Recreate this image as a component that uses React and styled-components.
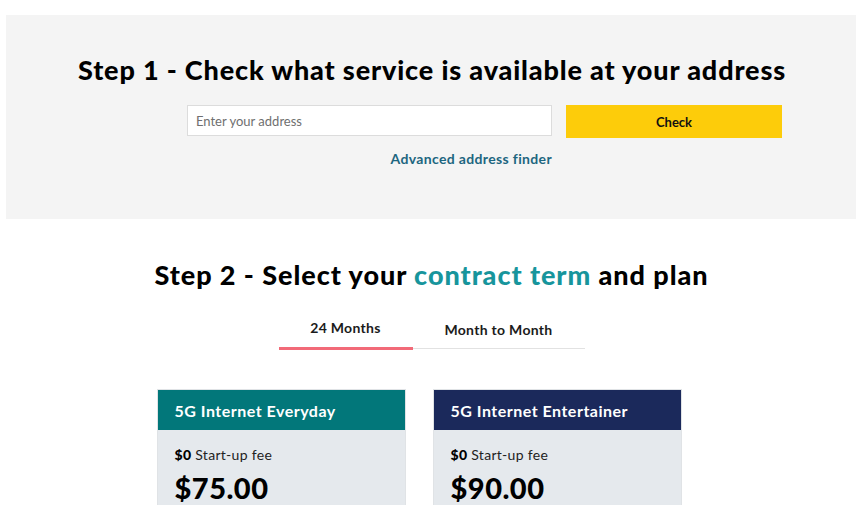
import React from 'react';
import styled, { createGlobalStyle } from 'styled-components';

const GlobalStyle = createGlobalStyle`
  body {
    margin: 0;
    background: #ffffff;
    font-family: Lato, "Noto Sans", Arial, sans-serif;
    color: #000000;
  }
`;

const Page = styled.div`
  width: 863px;
  height: 518px;
  overflow: hidden;
  padding-top: 15px;
  box-sizing: border-box;
`;

const AddressPanel = styled.section`
  margin: 0 7px 0 6px;
  height: 204px;
  background: #f4f4f4;
  padding-top: 39px;
  box-sizing: border-box;
`;

const Inner = styled.div`
  width: 706px;
  margin: 0 auto;
`;

const Heading = styled.h2`
  margin: 0;
  font-size: 27px;
  font-weight: 900;
  line-height: 31px;
  text-align: center;
  white-space: nowrap;
  letter-spacing: ${p => p.$spacing || '0.85px'};
`;

const Accent = styled.span`
  color: #17959c;
`;

const FormRow = styled.div`
  display: flex;
  justify-content: flex-end;
  gap: 14px;
  margin-top: 20px;
  padding-right: 2px;
`;

const InputCol = styled.div`
  display: flex;
  flex-direction: column;
  align-items: flex-end;
`;

const AddressInput = styled.input`
  width: 365px;
  height: 31px;
  box-sizing: border-box;
  border: 1px solid #dcdcdc;
  background: #ffffff;
  padding: 0 8px;
  font-family: inherit;
  font-size: 13px;
  outline: none;
  &::placeholder {
    color: #6f6f6f;
  }
`;

const FinderLink = styled.a`
  margin-top: 14px;
  font-size: 14px;
  font-weight: 700;
  letter-spacing: 0.35px;
  color: #1d6680;
  text-decoration: none;
`;

const CheckButton = styled.button`
  width: 216px;
  height: 33px;
  border: none;
  background: #fdcc0a;
  font-family: inherit;
  font-size: 13px;
  font-weight: 700;
  color: #111111;
`;

const PlanSection = styled.section`
  padding-top: 40px;
`;

const Tabs = styled.div`
  display: flex;
  width: 306px;
  margin: 29px auto 0;
  border-bottom: 1px solid #e2e2e2;
`;

const Tab = styled.div`
  width: ${p => p.$width}px;
  text-align: center;
  font-size: 14px;
  font-weight: 700;
  letter-spacing: 0.3px;
  color: #1b1b1b;
  padding: ${p => (p.$active ? '0 0 11px' : '2px 0 9px')};
  border-bottom: 3px solid ${p => (p.$active ? '#f26a78' : 'transparent')};
  margin-bottom: -2px;
`;

const Cards = styled.div`
  display: flex;
  gap: 27px;
  width: 550px;
  margin: 40px auto 0;
`;

const Card = styled.div`
  width: 249px;
  border: 1px solid #e0e3e6;
  border-bottom: none;
  box-sizing: border-box;
  background: #e5e9ed;
`;

const CardHeader = styled.div`
  height: 40px;
  display: flex;
  align-items: center;
  padding-left: 17px;
  background: ${p => p.$color};
  color: #ffffff;
  font-size: 16px;
  font-weight: 700;
  letter-spacing: 0.5px;
`;

const CardBody = styled.div`
  box-sizing: border-box;
  height: 75px;
  padding: 16px 17px 0;
`;

const Fee = styled.div`
  font-size: 14px;
  letter-spacing: 0.3px;
  color: #222222;
  b {
    font-weight: 900;
    color: #000000;
  }
`;

const Price = styled.div`
  margin-top: 9px;
  font-size: 29px;
  font-weight: 900;
  line-height: 32px;
  letter-spacing: 0.5px;
`;

const plans = [
  { name: '5G Internet Everyday', color: '#02777a', price: '$75.00' },
  { name: '5G Internet Entertainer', color: '#1b295b', price: '$90.00' },
];

export default function App() {
  return (
    <Page>
      <GlobalStyle />
      <AddressPanel>
        <Inner>
          <Heading>Step 1 - Check what service is available at your address</Heading>
          <FormRow>
            <InputCol>
              <AddressInput placeholder="Enter your address" />
              <FinderLink href="#">Advanced address finder</FinderLink>
            </InputCol>
            <CheckButton>Check</CheckButton>
          </FormRow>
        </Inner>
      </AddressPanel>
      <PlanSection>
        <Heading $spacing="0.95px">
          Step 2 - Select your <Accent>contract term</Accent> and plan
        </Heading>
        <Tabs>
          <Tab $active $width={134}>24 Months</Tab>
          <Tab $width={172}>Month to Month</Tab>
        </Tabs>
        <Cards>
          {plans.map(plan => (
            <Card key={plan.name}>
              <CardHeader $color={plan.color}>{plan.name}</CardHeader>
              <CardBody>
                <Fee><b>$0</b> Start-up fee</Fee>
                <Price>{plan.price}</Price>
              </CardBody>
            </Card>
          ))}
        </Cards>
      </PlanSection>
    </Page>
  );
}
